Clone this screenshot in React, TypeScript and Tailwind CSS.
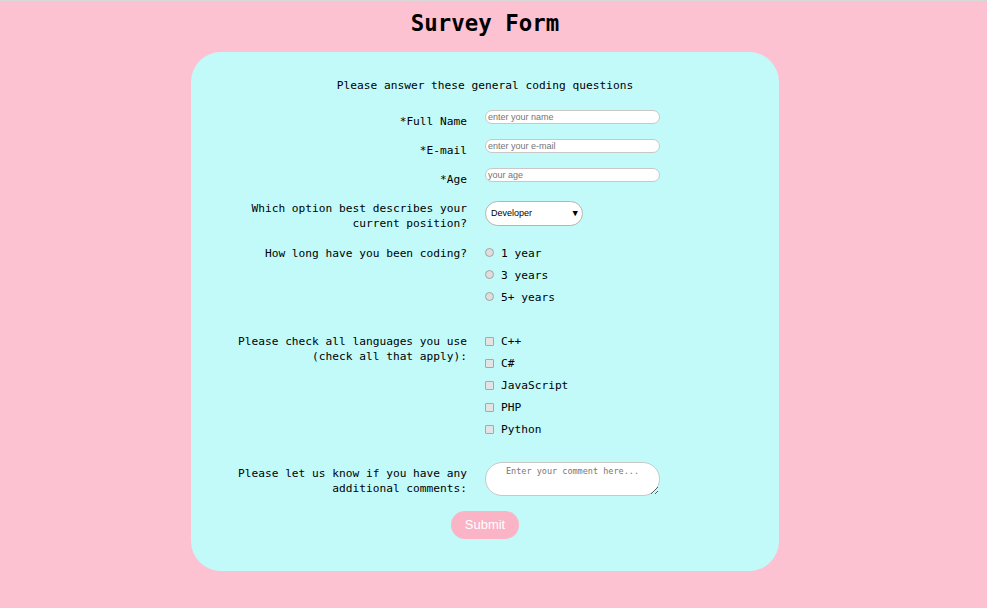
import React from "react"

const mono = "font-['DejaVu_Sans_Mono','Liberation_Mono',monospace]"
const sans = "font-['Liberation_Sans',Arial,sans-serif]"

function Label({ children, className = "" }: { children: React.ReactNode; className?: string }) {
    return (
        <div className={`w-[294px] shrink-0 pl-[36px] pr-[18px] text-right leading-[15px] ${className}`}>{children}</div>
    )
}

function TextField({ placeholder }: { placeholder: string }) {
    return (
        <input
            type="text"
            placeholder={placeholder}
            className={`w-[175px] h-[14px] rounded-full border border-[#c8c8c8] bg-white pl-[2px] text-[9px] placeholder:text-[#757575] outline-none ${sans}`}
        />
    )
}

const years = ["1 year", "3 years", "5+ years"]
const langs = ["C++", "C#", "JavaScript", "PHP", "Python"]

export default function App() {
    return (
        <div className={`min-h-screen bg-[#fdc2d1] border-t border-[#d8d8d8] pr-[17px] text-black ${mono}`}>
            <h1 className="pt-[8px] text-center text-[22.4px] font-bold leading-[28px]">Survey Form</h1>

            <form className="w-[588px] mx-auto mt-[15px] rounded-[30px] bg-[#c2fafa] pt-[26px] pb-[32px] text-[11.2px]">
                <p className="text-center leading-[15px]">Please answer these general coding questions</p>

                {/* campos de texto */}
                <div className="flex items-start mt-[17px]">
                    <Label className="pt-[4px]">*Full Name</Label>
                    <TextField placeholder="enter your name" />
                </div>
                <div className="flex items-start mt-[10px]">
                    <Label className="pt-[4px]">*E-mail</Label>
                    <TextField placeholder="enter your e-mail" />
                </div>
                <div className="flex items-start mt-[10px]">
                    <Label className="pt-[4px]">*Age</Label>
                    <TextField placeholder="your age" />
                </div>

                <div className="flex items-start mt-[14px]">
                    <Label>Which option best describes your current position?</Label>
                    <div className="relative w-[98px] h-[25px]">
                        <select
                            defaultValue="Developer"
                            className={`appearance-none w-[98px] h-[25px] rounded-full border border-[#b4b4b4] bg-white pl-[5px] text-[9px] outline-none ${sans}`}
                        >
                            <option>Developer</option>
                            <option>Student</option>
                            <option>Other</option>
                        </select>
                        <span className="pointer-events-none absolute right-[5px] top-[6px] text-[9px] leading-[12px]">▼</span>
                    </div>
                </div>

                <div className="flex items-start mt-[15px]">
                    <Label>How long have you been coding?</Label>
                    <div className="flex flex-col gap-[7px]">
                        {years.map((y) => (
                            <label key={y} className="flex items-start h-[15px] leading-[15px]">
                                <input
                                    type="radio"
                                    name="years"
                                    className="appearance-none mt-[2px] w-[9px] h-[9px] rounded-full border border-[#a3a3a3] bg-[#dedede]"
                                />
                                <span className="ml-[7px]">{y}</span>
                            </label>
                        ))}
                    </div>
                </div>

                <div className="flex items-start mt-[29px]">
                    <Label>Please check all languages you use (check all that apply):</Label>
                    <div className="flex flex-col gap-[7px]">
                        {langs.map((l) => (
                            <label key={l} className="flex items-start h-[15px] leading-[15px]">
                                <input
                                    type="checkbox"
                                    className="appearance-none mt-[3px] w-[9px] h-[9px] rounded-[1px] border border-[#a8a8a8] bg-[#e4e4e4]"
                                />
                                <span className="ml-[7px]">{l}</span>
                            </label>
                        ))}
                    </div>
                </div>

                <div className="flex items-start mt-[25px]">
                    <Label className="pt-[4px]">Please let us know if you have any additional comments:</Label>
                    <textarea
                        placeholder="Enter your comment here..."
                        className={`w-[175px] h-[34px] rounded-[17px] border border-[#c8c8c8] bg-white pt-[3px] px-[8px] text-center text-[8.5px] leading-[11px] placeholder:text-[#777] outline-none ${mono}`}
                    />
                </div>

                <div className="flex justify-center mt-[15px]">
                    <button
                        type="button"
                        className={`w-[68px] h-[28px] rounded-full bg-[#fbb3c6] text-white text-[13px] ${sans}`}
                    >
                        Submit
                    </button>
                </div>
            </form>
        </div>
    )
}
